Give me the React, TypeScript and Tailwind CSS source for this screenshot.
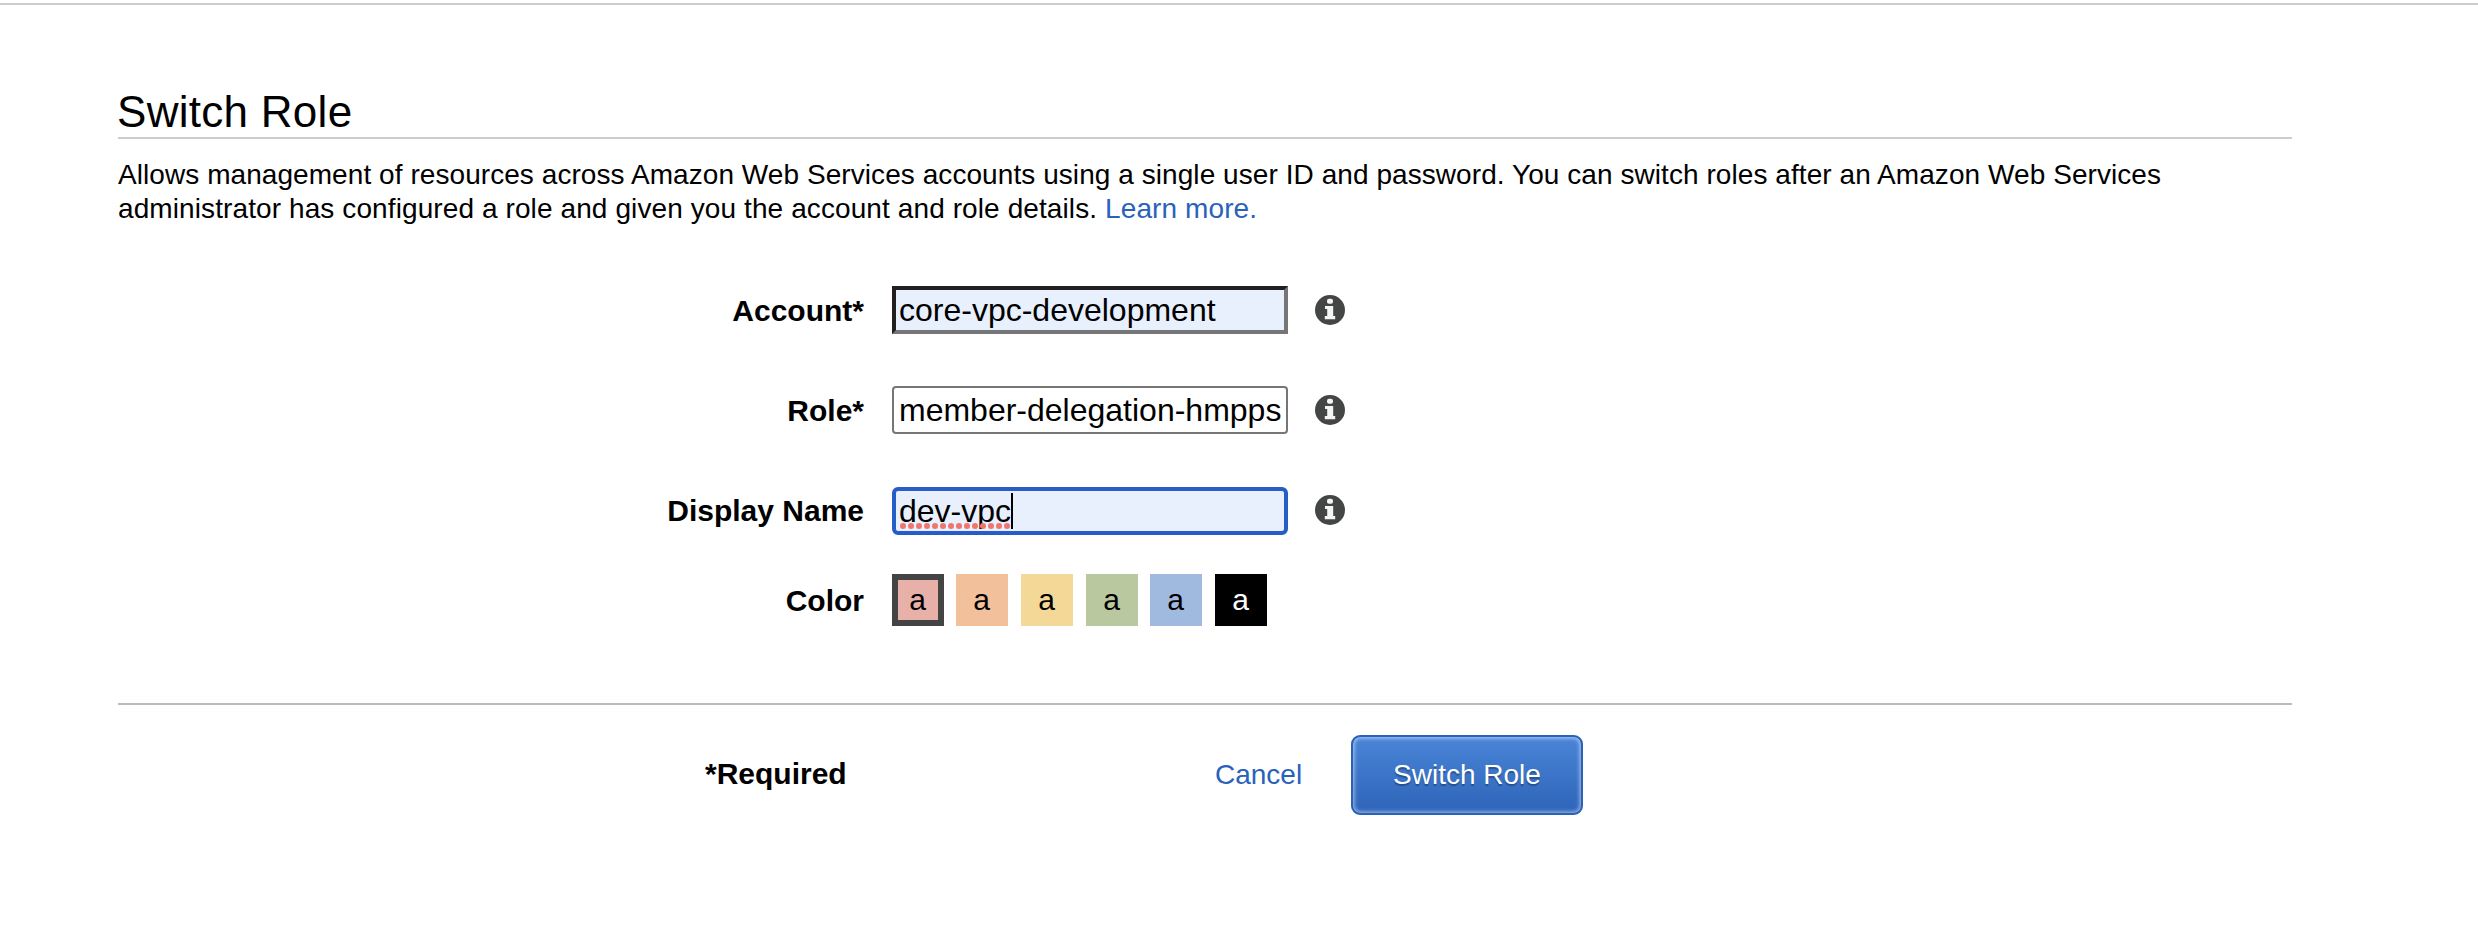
import type { ReactNode } from "react";

function InfoIcon({ className = "" }: { className?: string }) {
  return (
    <svg width="30" height="30" viewBox="0 0 30 30" className={`ml-[27px] shrink-0 ${className}`} aria-hidden="true">
      <circle cx="15" cy="15" r="15" fill="#444645" />
      <rect x="12" y="3.8" width="6" height="5" rx="2" fill="#f4f4f4" />
      <path d="M10 11H18.2V21H20.2V24.2H9.8V21H12.2V14H10Z" fill="#f4f4f4" />
    </svg>
  );
}

type RowProps = { label: string; className: string; labelClass?: string; children: ReactNode };

function Row({ label, className, labelClass = "pt-px", children }: RowProps) {
  return (
    <div className={`flex items-center ${className}`}>
      <div className={`mr-[28px] w-[746px] text-right text-[30px] leading-[48px] font-bold ${labelClass}`}>{label}</div>
      {children}
    </div>
  );
}

const swatches = [
  { name: "red", style: "bg-[#e7b1a9] border-[6px] border-[#444444]" },
  { name: "orange", style: "ml-[12px] bg-[#f2c09a]" },
  { name: "yellow", style: "ml-[13px] bg-[#f4d898]" },
  { name: "green", style: "ml-[13px] bg-[#b9c89f]" },
  { name: "blue", style: "ml-[12px] bg-[#a0b9df]" },
  { name: "black", style: "ml-[13px] bg-black text-white" },
];

const field = "h-12 w-[396px] text-[32px] leading-[40px] outline-none";

export default function App() {
  return (
    <div className="h-[940px] w-[2478px] bg-white pt-[3px] font-['Liberation_Sans',Arial,sans-serif] text-black">
      <div className="h-[2px] bg-[#cccccc]" />
      <main className="mr-[186px] ml-[118px] pt-[82px]">
        <h1 className="border-b-2 border-[#cccccc] text-[44px] leading-[50px] tracking-[0.28px]">
          <span className="-ml-px">Switch Role</span>
        </h1>
        <p className="mt-[19px] text-[28px] leading-[34px]">
          <span className="tracking-[0.065px]">
            Allows management of resources across Amazon Web Services accounts using a single user ID and password. You
            can switch roles after an Amazon Web Services
          </span>
          <br />
          <span className="tracking-[0.1px]">
            administrator has configured a role and given you the account and role details.{" "}
            <a className="text-[#2a62bb]">Learn more.</a>
          </span>
        </p>

        <form>
          <Row label="Account*" className="mt-[60px] h-12">
            <input
              readOnly
              value="core-vpc-development"
              className={`${field} border-4 border-t-[#231f20] border-r-[#767676] border-b-[#767676] border-l-[#231f20] bg-[#e8effd] px-[3px]`}
            />
            <InfoIcon />
          </Row>
          <Row label="Role*" className="mt-[52px] h-12">
            <input
              readOnly
              value="member-delegation-hmpps"
              className={`${field} rounded-[4px] border-2 border-[#767676] bg-white px-[5px]`}
            />
            <InfoIcon />
          </Row>
          <Row label="Display Name" className="mt-[53px] h-12" labelClass="pb-px">
            <div className={`${field} flex items-start rounded-[6px] border-4 border-[#265dc7] bg-[#e8effd] px-[3px]`}>
              <span className="relative">
                dev-vpc
                <svg width="112" height="6" className="absolute top-[32px] left-px" aria-hidden="true">
                  {Array.from({ length: 14 }, (_, i) => (
                    <circle key={i} cx={3 + i * 8} cy="3" r="3" fill="#f0756f" />
                  ))}
                </svg>
              </span>
              <span className="mt-[2px] h-9 w-[2px] bg-black" />
            </div>
            <InfoIcon className="mb-[2px]" />
          </Row>
          <Row label="Color" className="mt-[39px] h-[52px]">
            <div className="flex">
              {swatches.map((s) => (
                <div key={s.name} className={`flex size-[52px] items-center justify-center pr-px text-[30px] leading-none ${s.style}`}>
                  a
                </div>
              ))}
            </div>
          </Row>

          <div className="mt-[77px] flex items-center border-t-2 border-[#bbbbbb] pt-[30px]">
            <span className="ml-[587px] w-[510px] pb-[2px] text-[30px] leading-[48px] font-bold">*Required</span>
            <a className="w-[136px] text-[28px] text-[#2a62bb]">Cancel</a>
            <button
              type="button"
              className="h-20 w-[232px] rounded-[9px] border-2 border-[#2a62bb] bg-linear-to-b from-[#4a86d8] to-[#2d63b8] bg-origin-border text-[28px] text-white shadow-[inset_0_0_4px_1px_rgba(255,255,255,0.6)] [text-shadow:0_2px_1px_rgba(0,0,0,0.3)]"
            >
              Switch Role
            </button>
          </div>
        </form>
      </main>
    </div>
  );
}
